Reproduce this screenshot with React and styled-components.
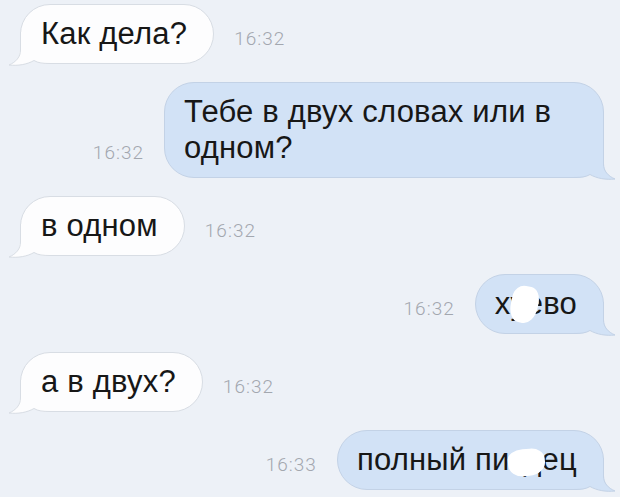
import React from 'react';
import styled, { createGlobalStyle } from 'styled-components';

const GlobalStyle = createGlobalStyle`
  html, body {
    margin: 0;
    padding: 0;
    background: #edf1f7;
  }
  body {
    font-family: "Liberation Sans", Arial, sans-serif;
    overflow: hidden;
  }
`;

const Chat = styled.div`
  display: flex;
  flex-direction: column;
  gap: 18px;
  padding: 4px 16px 0 20px;
  width: 620px;
  height: 497px;
  box-sizing: border-box;
`;

const Row = styled.div`
  display: flex;
  align-items: flex-end;
  gap: 20px;
  justify-content: ${p => (p.$out ? 'flex-end' : 'flex-start')};
`;

const Bubble = styled.div`
  position: relative;
  box-sizing: border-box;
  max-width: 440px;
  padding: ${p => (p.$out ? '11px 26px 11px 19px' : '11px 26px 11px 20px')};
  border-radius: 30px;
  background: ${p => (p.$out ? '#d2e2f6' : '#fdfdfe')};
  border: 1px solid ${p => (p.$out ? '#c3d2e6' : '#d8dde4')};
  color: #171717;
  font-size: 31px;
  line-height: 36px;
  letter-spacing: 0.2px;
`;

const TailSvg = styled.svg`
  position: absolute;
  bottom: -3px;
  width: 42px;
  height: 34px;
  overflow: visible;
  ${p => (p.$out ? 'right: -13px; transform: scaleX(-1);' : 'left: -13px;')}
`;

const Text = styled.span`
  position: relative;
`;

// white blot painted over part of a word
const Censor = styled.span`
  position: relative;
  &::after {
    content: "";
    position: absolute;
    left: ${p => p.$x}px;
    top: ${p => p.$y}px;
    width: ${p => p.$w}px;
    height: ${p => p.$h}px;
    background: #ffffff;
    border-radius: 42% 38% 45% 40% / 35% 40% 48% 45%;
    transform: rotate(${p => p.$r}deg);
  }
`;

const Time = styled.span`
  font-family: Roboto, "Liberation Sans", sans-serif;
  font-weight: 300;
  font-size: 19px;
  line-height: 20px;
  letter-spacing: 1px;
  color: #a3a7af;
  margin-bottom: 15px;
  white-space: nowrap;
`;

function Tail({ out }) {
  const fill = out ? '#d2e2f6' : '#fdfdfe';
  const stroke = out ? '#c3d2e6' : '#d8dde4';
  return (
    <TailSvg $out={out} viewBox="0 0 42 34">
      <path
        d="M12,0 L12,18 C12,25 8,30 1,33 C10,34 19,32.5 26,28.5 C30,31 35,32 42,32 L42,0 Z"
        fill={fill}
      />
      <path
        d="M12.5,0 L12.5,18 C12.5,25 8,30 1,33 C10,34 19,32.5 26,28.5 C30,31 35,31.5 42,31.5"
        fill="none"
        stroke={stroke}
        strokeWidth="1"
      />
    </TailSvg>
  );
}

function Message({ out, time, children }) {
  return (
    <Row $out={out}>
      {out && <Time>{time}</Time>}
      <Bubble $out={out}>
        <Tail out={out} />
        <Text>{children}</Text>
      </Bubble>
      {!out && <Time>{time}</Time>}
    </Row>
  );
}

export default function App() {
  return (
    <>
      <GlobalStyle />
      <Chat>
        <Message time="16:32">Как дела?</Message>
        <Message out time="16:32">Тебе в двух словах или в одном?</Message>
        <Message time="16:32">в одном</Message>
        <Message out time="16:32">
          х<Censor $x={1} $y={0} $w={27} $h={37} $r={12}>уе</Censor>во
        </Message>
        <Message time="16:32">а в двух?</Message>
        <Message out time="16:33">
          полный пи<Censor $x={-2} $y={7} $w={37} $h={27} $r={-5}>зд</Censor>ец
        </Message>
      </Chat>
    </>
  );
}
